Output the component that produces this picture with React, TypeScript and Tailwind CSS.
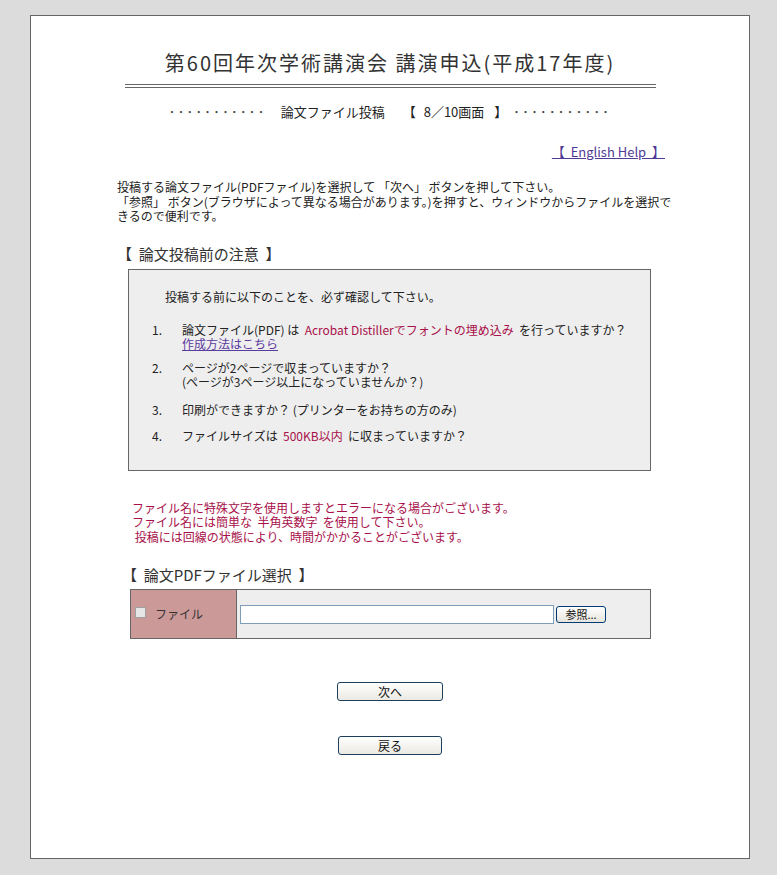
import React from 'react';

const jp = '"Noto Sans CJK JP", "Noto Sans", sans-serif';

function Dots() {
  return (
    <span className="tracking-[2.4px] text-[#444]">･･･････････</span>
  );
}

function App() {
  return (
    <div className="min-h-[875px] bg-[#dcdcdc] pt-[15px] pl-[30px]" style={{ fontFamily: jp }}>
      <div className="w-[720px] h-[844px] border border-[#666] bg-white text-[#333]">
        <h1 className="mt-[35px] text-center text-[20px] leading-[24px] font-normal tracking-[2px] text-[#333]">
          第60回年次学術講演会 講演申込(平成17年度)
        </h1>
        <div className="mt-[9px] mx-auto w-[531px] h-[4px] border-t border-b border-[#666]" />

        <div className="mt-[16px] flex justify-center items-center text-[13px] leading-[16px] text-[#222]">
          <Dots />
          <span className="ml-[14px]">論文ファイル投稿</span>
          <span className="ml-[18px]">【</span>
          <span className="ml-[8px]">8／10画面</span>
          <span className="ml-[10px]">】</span>
          <span className="ml-[6px]"><Dots /></span>
        </div>

        <div className="pl-[86px] w-[634px]">
          <div className="mt-[24px] text-right text-[13px] leading-[16px]">
            <a href="#" className="text-[#4f3a96] underline">【&nbsp;&nbsp;English Help&nbsp;&nbsp;】</a>
          </div>

          <p className="mt-[20px] text-[12px] leading-[14.5px] text-[#222] whitespace-nowrap">
            投稿する論文ファイル(PDFファイル)を選択して 「次へ」 ボタンを押して下さい。<br />
            「参照」 ボタン(ブラウザによって異なる場合があります。)を押すと、ウィンドウからファイルを選択で<br />
            きるので便利です。
          </p>

          <h2 className="mt-[20px] text-[15px] leading-[20px] font-normal text-[#333]">
            【&nbsp;&nbsp;論文投稿前の注意&nbsp;&nbsp;】
          </h2>

          <div className="mt-[5px] ml-[11px] w-[523px] h-[202px] border border-[#666] bg-[#eeeeee] pt-[20px] text-[12px] leading-[14.5px] text-[#222]">
            <p className="pl-[36px]">投稿する前に以下のことを、必ず確認して下さい。</p>
            <ol className="mt-[18.5px]">
              <li className="flex">
                <span className="w-[53px] pl-[23px] shrink-0">1.</span>
                <div>
                  論文ファイル(PDF) は&nbsp;&nbsp;
                  <span className="text-[#a8104a]">Acrobat Distillerでフォントの埋め込み</span>
                  &nbsp;&nbsp;を行っていますか？<br />
                  <a href="#" className="text-[#5b3aa0] underline">作成方法はこちら</a>
                </div>
              </li>
              <li className="flex mt-[9px]">
                <span className="w-[53px] pl-[23px] shrink-0">2.</span>
                <div>
                  ページが2ページで収まっていますか？<br />
                  (ページが3ページ以上になっていませんか？)
                </div>
              </li>
              <li className="flex mt-[13px]">
                <span className="w-[53px] pl-[23px] shrink-0">3.</span>
                <div>印刷ができますか？ (プリンターをお持ちの方のみ)</div>
              </li>
              <li className="flex mt-[11.5px]">
                <span className="w-[53px] pl-[23px] shrink-0">4.</span>
                <div>
                  ファイルサイズは&nbsp;&nbsp;
                  <span className="text-[#a8104a]">500KB以内</span>
                  &nbsp;&nbsp;に収まっていますか？
                </div>
              </li>
            </ol>
          </div>

          <p className="mt-[30px] ml-[15px] text-[12px] leading-[14.5px] text-[#a8104a]">
            ファイル名に特殊文字を使用しますとエラーになる場合がございます。<br />
            ファイル名には簡単な&nbsp;&nbsp;半角英数字&nbsp;&nbsp;を使用して下さい。<br />
            &nbsp;投稿には回線の状態により、時間がかかることがございます。
          </p>

          <h2 className="mt-[21px] ml-[5px] text-[15px] leading-[20px] font-normal text-[#333]">
            【&nbsp;&nbsp;論文PDFファイル選択&nbsp;&nbsp;】
          </h2>

          <div className="mt-[4px] ml-[13px] w-[521px] h-[50px] border border-[#666] flex">
            <div className="w-[106px] bg-[#cc9999] border-r border-[#666] flex items-center pl-[4px] text-[12px] text-[#333]">
              <input
                type="checkbox"
                className="appearance-none w-[11px] h-[11px] border border-[#a0a0a0] bg-[#e6e6e6] mb-[4px]"
              />
              <span className="ml-[9px]">ファイル</span>
            </div>
            <div className="flex-1 bg-[#eeeeee] flex items-center pl-[3px]">
              <input
                type="text"
                readOnly
                className="w-[314px] h-[19px] border border-[#7f9db9] bg-white"
              />
              <button className="ml-[2px] w-[50px] h-[17px] rounded-[3px] border border-[#003c74] bg-gradient-to-b from-white to-[#e6e4dc] text-[11px] leading-[14px] text-[#111]">
                参照...
              </button>
            </div>
          </div>
        </div>

        <div className="mt-[43px] flex justify-center">
          <button className="w-[106px] h-[19px] rounded-[3px] border border-[#1c3f5e] bg-gradient-to-b from-white to-[#ebe9e2] text-[12px] leading-[16px] text-[#111]">
            次へ
          </button>
        </div>
        <div className="mt-[35px] flex justify-center">
          <button className="w-[104px] h-[19px] rounded-[3px] border border-[#1c3f5e] bg-gradient-to-b from-white to-[#ebe9e2] text-[12px] leading-[16px] text-[#111]">
            戻る
          </button>
        </div>
      </div>
    </div>
  );
}

export default App;
